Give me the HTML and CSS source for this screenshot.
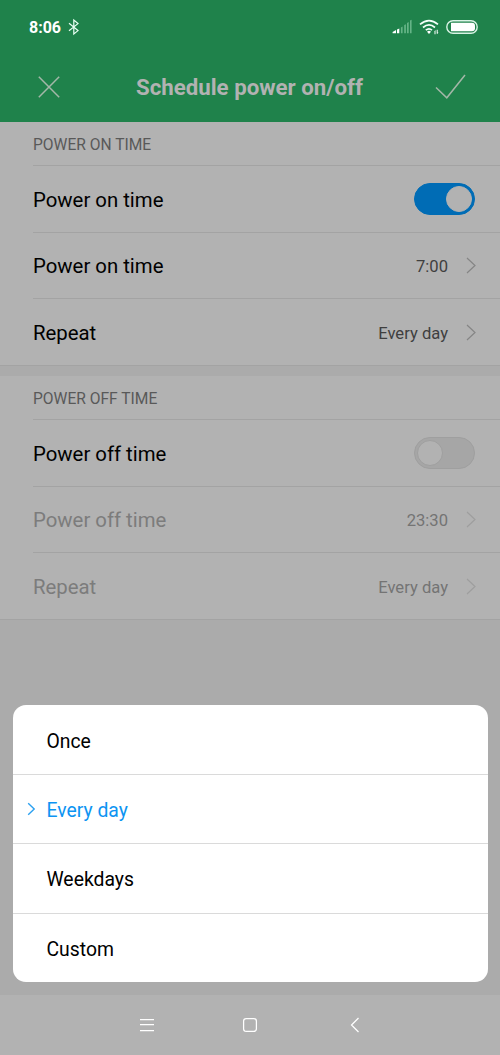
FILE: index.html
```html
<!DOCTYPE html>
<html lang="en">
<head>
<meta charset="utf-8">
<title>Schedule power on/off</title>
<link rel="stylesheet" href="styles.css">
</head>
<body>
<div class="screen">
  <header class="header">
    <div class="status">
      <span class="clock">8:06</span>
      <svg class="bluetooth" width="12" height="16" viewBox="0 0 12 16"><path d="M1 4.2 10 11.6 5.8 15V1L10 4.6 1 11.8"/></svg>
      <svg class="signal" width="20" height="14" viewBox="0 0 20 14"><path class="on" d="M.6 13.2V12l3.4-2v3.2zM5 9.6l2.3-1.2v4.8H5z"/><path class="off" d="M8.9 7.4l1.7-.9v6.7H8.9zM12.2 5.1l1.7-.8v8.9h-1.7zM15 2.9l1.7-.8v11.1H15zM18 .6l1.6-.8v13.4H18z"/></svg>
      <svg class="wifi" width="20" height="16" viewBox="0 0 20 16"><path class="arc" d="M1 5.4Q10 -2.2 19 5.4M4 8.5Q10 3.4 16 8.5M6.8 11.2Q10 8.6 13 11.2"/><path class="fill" d="M8 12.7Q10 11 12 12.7L10 15zM15.2 12.5l1.3-1.5v4.2h-1v-2.7zM17.7 10.8h1v2.7h.8l-1.3 1.5-.5-.5z"/></svg>
      <svg class="battery" width="32" height="14" viewBox="0 0 32 14"><rect class="case" x=".8" y=".8" width="30.4" height="12.4" rx="6.2"/><path class="fill" d="M5 2.8H26a3 3 0 0 1 3 3v2.4a3 3 0 0 1-3 3H5z"/></svg>
    </div>
    <div class="titlebar">
      <svg class="close" width="22" height="22" viewBox="0 0 22 22"><path d="M.8.8l20.4 20.4M21.2.8.8 21.2"/></svg>
      <h1 class="title">Schedule power on/off</h1>
      <svg class="check" width="32" height="25" viewBox="0 0 32 25"><path d="M1 12.5 11.8 22.8 30 0"/></svg>
    </div>
  </header>

  <section class="group">
    <h2 class="caption">POWER ON TIME</h2>
    <div class="row"><span class="label">Power on time</span><span class="toggle on"><span class="knob"></span></span></div>
    <div class="row"><span class="label">Power on time</span><span class="value">7:00</span><svg class="arrow" width="10" height="17" viewBox="0 0 10 17"><path d="M1 1l8 7.5L1 16"/></svg></div>
    <div class="row"><span class="label">Repeat</span><span class="value">Every day</span><svg class="arrow" width="10" height="17" viewBox="0 0 10 17"><path d="M1 1l8 7.5L1 16"/></svg></div>
  </section>

  <section class="group">
    <h2 class="caption">POWER OFF TIME</h2>
    <div class="row"><span class="label">Power off time</span><span class="toggle"><span class="knob"></span></span></div>
    <div class="row disabled"><span class="label">Power off time</span><span class="value">23:30</span><svg class="arrow" width="10" height="17" viewBox="0 0 10 17"><path d="M1 1l8 7.5L1 16"/></svg></div>
    <div class="row disabled"><span class="label">Repeat</span><span class="value">Every day</span><svg class="arrow" width="10" height="17" viewBox="0 0 10 17"><path d="M1 1l8 7.5L1 16"/></svg></div>
  </section>

  <div class="sheet">
    <div class="option">Once</div>
    <div class="option selected"><svg class="marker" width="9" height="14" viewBox="0 0 9 14"><path d="M1.2 1.2 7.2 7l-6 5.8"/></svg>Every day</div>
    <div class="option">Weekdays</div>
    <div class="option">Custom</div>
  </div>

  <nav class="navbar">
    <svg width="14" height="14" viewBox="0 0 14 14"><path d="M0 1.5h14M0 6.5h14M0 12.5h14"/></svg>
    <svg width="14" height="14" viewBox="0 0 14 14"><rect x=".6" y=".6" width="12.8" height="12.8" rx="2.6"/></svg>
    <svg width="14" height="16" viewBox="0 0 14 16"><path d="M12.5 1 5.5 8l7 7"/></svg>
  </nav>
</div>
</body>
</html>
```
FILE: styles.css
```css
* { box-sizing: border-box; }
body { margin: 0; font-family: Roboto, "Liberation Sans", sans-serif; }
svg { display: block; flex: none; fill: none; overflow: visible; }
.screen { width: 500px; height: 1055px; display: flex; flex-direction: column; background: #ababab; overflow: hidden; }

.header { height: 122px; background: #1f824b; }
.status { height: 54px; display: flex; align-items: center; padding: 0 22px 0 29px; }
.clock { color: #fff; font-size: 16px; line-height: 20px; font-weight: 700; margin-right: 7px; padding-top: 2px; }
.bluetooth { stroke: #e9fff4; stroke-width: 1.2; }
.signal { margin: 0 7px 0 auto; }
.signal .on, .wifi .fill, .battery .fill { fill: #fff; }
.signal .off { fill: #65b487; }
.wifi { margin-right: 7px; }
.wifi .arc { stroke: #f4fff9; stroke-width: 1.7; }
.battery .case { stroke: #d9f3e5; stroke-width: 1.4; }
.titlebar { height: 68px; display: flex; align-items: center; padding: 0 33px 2px 38px; }
.title { flex: 1; margin: 0; padding: 0 9px 0 13px; font-size: 22.25px; line-height: 28px; font-weight: 700; color: #b2b2b2; text-align: center; }
.close, .check { stroke: #a3b7a8; stroke-width: 1.5; }

.group { background: #b2b2b2; border-bottom: 1px solid #a3a3a3; margin-bottom: 10px; }
.caption { height: 43px; margin: 0; padding: 2px 0 0 33px; font-size: 15.6px; line-height: 43px; font-weight: 400; color: #595959; }
.row { height: 66.67px; margin-left: 33px; padding: 2px 24px 0 0; display: flex; align-items: center; border-top: 1px solid #a3a3a3; color: #000; }
.group .row:last-child { height: 66.66px; }
.label { flex: 1; font-size: 20.35px; line-height: 26px; }
.value { font-size: 16.6px; line-height: 22px; color: #3f3f3f; margin-right: 18px; padding-top: 2px; }
.arrow { stroke: #858585; stroke-width: 1.2; margin-top: -2px; }
.disabled { color: #7c7c7c; }
.disabled .value { color: #747474; }
.disabled .arrow { stroke: #9e9e9e; }
.toggle { width: 61px; height: 32px; margin-top: -2px; margin-right: 1px; padding: 3px; border-radius: 16px; background: #a6a6a6; border: 1px solid #9f9f9f; }
.toggle .knob { display: block; width: 26px; height: 26px; margin: -1px; border-radius: 50%; background: #b2b2b2; border: 1px solid #9f9f9f; }
.toggle.on { background: #006cb5; border-color: #006cb5; }
.toggle.on .knob { margin-left: 28px; border-color: #b2b2b2; }

.sheet { height: 277px; margin: auto 12.5px 13px; border-radius: 13px; background: #fff; display: grid; grid-template-rows: 69px 69px 70px 69px; overflow: hidden; }
.option { display: flex; align-items: center; padding: 3px 0 0 34px; font-size: 19.35px; line-height: 26px; color: #000; }
.option:first-child { padding-top: 5px; }
.option + .option { border-top: 1px solid #dadada; }
.selected { color: #0d94f2; padding-left: 14px; }
.marker { stroke: #2ba0f0; stroke-width: 1.4; margin: -4px 11px 0 0; }

.navbar { height: 60px; background: #b2b2b2; display: flex; align-items: center; justify-content: space-between; padding: 0 140px; }
.navbar svg { stroke: #fff; stroke-width: 1.25; }
```
